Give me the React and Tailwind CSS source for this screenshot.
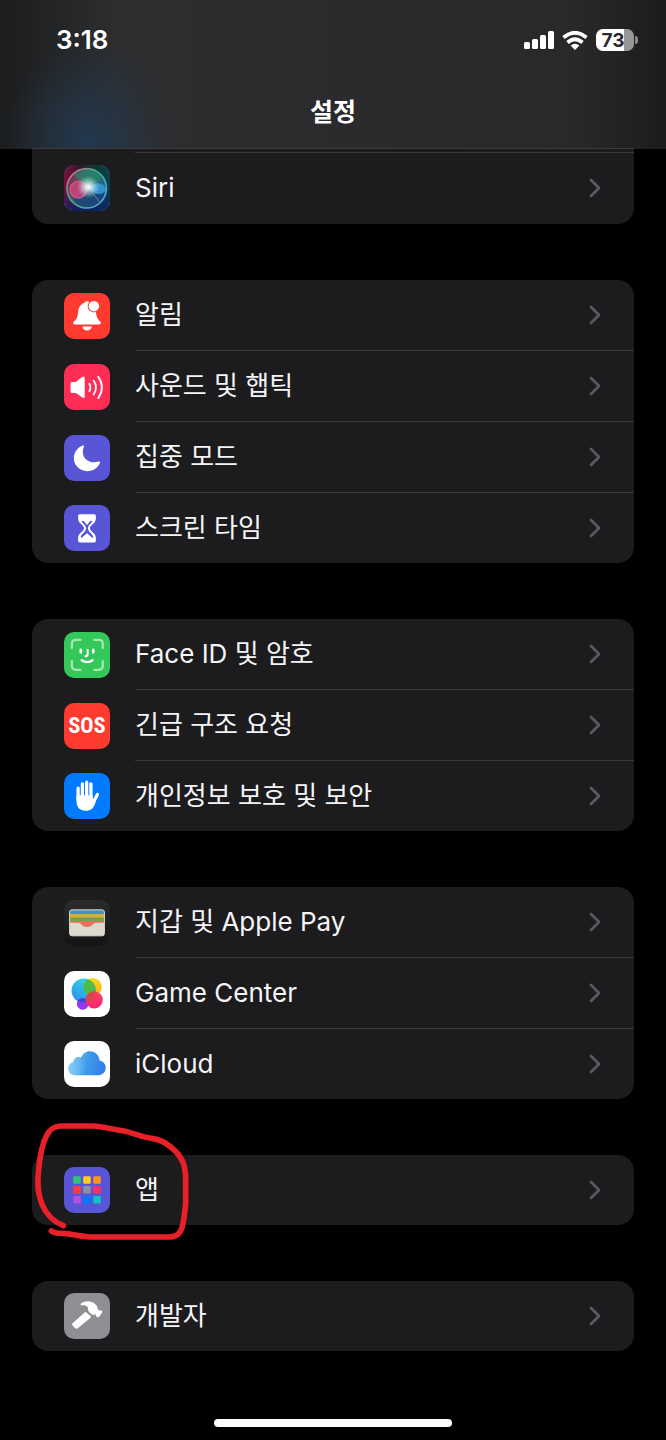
import React from 'react';

// Icons (all drawn on a 140x140 grid)
function IconBox({ className = '', children }) {
  return (
    <svg viewBox="0 0 140 140" className={`size-[46px] shrink-0 rounded-[10px] ${className}`} aria-hidden="true">
      {children}
    </svg>
  );
}

function SiriIcon() {
  return (
    <IconBox className="bg-[#14222c]">
      <defs>
        <linearGradient id="siriBg" x1="0" y1="0" x2="1" y2="0">
          <stop offset="0" stopColor="#7a0f3a" />
          <stop offset="0.35" stopColor="#3a1430" />
          <stop offset="0.65" stopColor="#0c3a35" />
          <stop offset="1" stopColor="#0a3f48" />
        </linearGradient>
        <linearGradient id="siriShade" x1="0" y1="0" x2="0" y2="1">
          <stop offset="0.45" stopColor="#0b1f6e" stopOpacity="0" />
          <stop offset="1" stopColor="#0b1f6e" stopOpacity="0.8" />
        </linearGradient>
        <linearGradient id="siriOrb" x1="0" y1="0.3" x2="1" y2="0.7">
          <stop offset="0" stopColor="#8a2452" />
          <stop offset="0.45" stopColor="#3b6a6c" />
          <stop offset="1" stopColor="#1b5f94" />
        </linearGradient>
        <linearGradient id="siriRing" x1="0" y1="0" x2="1" y2="1">
          <stop offset="0" stopColor="#e06a8c" />
          <stop offset="0.4" stopColor="#3fae86" />
          <stop offset="1" stopColor="#5aa6e0" />
        </linearGradient>
        <radialGradient id="siriGlow">
          <stop offset="0" stopColor="#fff" />
          <stop offset="0.3" stopColor="#eafcff" stopOpacity="0.75" />
          <stop offset="1" stopColor="#b8e8e0" stopOpacity="0" />
        </radialGradient>
      </defs>
      <rect width="140" height="140" fill="url(#siriBg)" />
      <rect width="140" height="140" fill="url(#siriShade)" />
      <circle cx="69" cy="71" r="60" fill="url(#siriOrb)" />
      <path d="M30 30Q70 0 110 32Q120 50 72 70Z" fill="#1f8a68" opacity="0.65" />
      <path d="M72 70L128 84Q118 122 78 130Q40 128 28 104Z" fill="#173f74" opacity="0.75" />
      <circle cx="44" cy="75" r="26" fill="#e0427e" fillOpacity="0.75" stroke="#f07aa6" strokeWidth="2" />
      <path d="M74 70C92 48 124 52 126 74C120 96 92 92 74 70Z" fill="#3a9be0" opacity="0.85" />
      <path d="M75 70L108 112" stroke="#d8cfee" strokeWidth="3" opacity="0.4" />
      <circle cx="74" cy="67" r="34" fill="url(#siriGlow)" />
      <circle cx="69" cy="71" r="60" fill="none" stroke="url(#siriRing)" strokeWidth="5" />
      <path d="M2 26Q4 4 26 2M114 2Q136 4 138 26M138 114Q136 136 114 138M26 138Q4 136 2 114" fill="none" stroke="#6d7480" strokeWidth="2" opacity="0.7" />
    </IconBox>
  );
}

function BellIcon() {
  return (
    <IconBox className="bg-[#ff3b30]">
      <path d="M36 96C27 96 26 90 31 86C39 79 42 72 43 58C44 43 52 34 62 30C64 23 76 23 78 30C92 36 96 46 97 58C98 72 102 79 109 86C114 90 113 96 104 96Z" fill="#fff" />
      <circle cx="91" cy="40" r="19" fill="#ff3b30" />
      <circle cx="91" cy="40" r="16" fill="#fff" />
      <path d="M56 102H85Q82 114 70 114Q59 114 56 102Z" fill="#fff" />
    </IconBox>
  );
}

function SoundIcon() {
  return (
    <IconBox className="bg-[#ff2d55]">
      <path d="M24 55H36L56 39Q63 35 63 43V99Q63 107 56 102L36 88H24Q20 88 20 84V59Q20 55 24 55Z" fill="#fff" />
      <g fill="none" stroke="#fff" strokeWidth="5.5" strokeLinecap="round">
        <path d="M77 60Q84 71 77 83" />
        <path d="M90 50Q105 71 90 93" />
        <path d="M104 39Q127 71 104 104" />
      </g>
    </IconBox>
  );
}

function MoonIcon() {
  return (
    <IconBox className="bg-[#5856d6]">
      <path d="M56 33C60 31 62 33 60 37C56 48 56 62 65 72C75 82 91 86 105 81C109 80 111 82 109 86C102 101 88 110 71 110C48 110 30 93 30 71C30 54 40 39 56 33Z" fill="#fff" />
    </IconBox>
  );
}

function HourglassIcon() {
  return (
    <IconBox className="bg-[#5856d6]">
      <path d="M48 28H92Q97 28 97 33V42C97 56 79 61 79 71C79 81 97 86 97 100V109Q97 114 92 114H48Q43 114 43 109V100C43 86 61 81 61 71C61 61 43 56 43 42V33Q43 28 48 28Z" fill="#fff" />
      <path d="M53 49H87C83 57 73 62 73 71C73 83 89 88 89 98Q88 101 85 99L70 86L55 99Q52 101 51 98C51 88 67 83 67 71C67 62 57 57 53 49Z" fill="#5856d6" />
      <path d="M60 49H80L70 61Z" fill="#fff" />
    </IconBox>
  );
}

function FaceIdIcon() {
  return (
    <IconBox className="bg-[#34c759]">
      <path d="M24 49V36Q24 24 36 24H50M92 24H106Q118 24 118 36V49M118 89V103Q118 115 106 115H92M50 115H36Q24 115 24 103V89" fill="none" stroke="#a4e6b4" strokeWidth="7" strokeLinecap="round" />
      <g fill="none" stroke="#fff" strokeWidth="8" strokeLinecap="round">
        <path d="M51 54V62M89 54V62" />
        <path d="M72 54V67Q72 74 65 74" strokeWidth="6" />
        <path d="M54 86Q71 97 87 86" strokeWidth="7" />
      </g>
    </IconBox>
  );
}

function SosIcon() {
  return (
    <span className="flex size-[46px] shrink-0 items-center justify-center rounded-[10px] bg-[#ff3b30] font-['Roboto_Condensed','Open_Sans_Condensed','Noto_Sans_Condensed','Roboto',sans-serif] text-[22px] font-bold text-white">
      SOS
    </span>
  );
}

function HandIcon() {
  return (
    <IconBox className="bg-[#007aff]">
      <path d="M43 46V80M56 33V75M69 28V75M82 33V75M102 65L90 88" fill="none" stroke="#fff" strokeWidth="10" strokeLinecap="round" />
      <path d="M38 68H87V79L97 78L95 92C90 107 82 115 66 115C48 115 38 104 38 86Z" fill="#fff" />
    </IconBox>
  );
}

function WalletIcon() {
  return (
    <IconBox className="bg-linear-to-b from-[#2c2c2c] to-[#141414]">
      <clipPath id="walletClip">
        <rect x="17" y="30" width="106" height="79" rx="7" />
      </clipPath>
      <g clipPath="url(#walletClip)">
        <rect x="16" y="29" width="108" height="81" fill="#dcd9cd" />
        <rect x="16" y="29" width="108" height="16" fill="#4b91b8" />
        <rect x="16" y="43" width="108" height="12" fill="#dcae35" />
        <rect x="16" y="53" width="108" height="13" fill="#76a445" />
        <path d="M16 64H124V69H96C88 69 86 82 70 82C54 82 52 69 44 69H16Z" fill="#e96f5e" />
      </g>
      <rect x="17" y="30" width="106" height="79" rx="7" fill="none" stroke="#dcd9cd" strokeWidth="3" />
    </IconBox>
  );
}

function GameCenterIcon() {
  return (
    <IconBox className="bg-white">
      <defs>
        <linearGradient id="gcBlue" x1="0.8" y1="0" x2="0.2" y2="1">
          <stop offset="0" stopColor="#35dcd8" />
          <stop offset="1" stopColor="#2c8df5" />
        </linearGradient>
        <linearGradient id="gcYellow" x1="0" y1="0" x2="0.6" y2="1">
          <stop offset="0" stopColor="#f7e21d" />
          <stop offset="1" stopColor="#ffb51c" />
        </linearGradient>
        <linearGradient id="gcRed" x1="0" y1="0" x2="0" y2="1">
          <stop offset="0" stopColor="#f5455c" />
          <stop offset="1" stopColor="#fb2476" />
        </linearGradient>
        <clipPath id="gcBlueClip">
          <circle cx="60" cy="60" r="37" />
        </clipPath>
      </defs>
      <circle cx="57" cy="100" r="18" fill="#9a35f5" />
      <circle cx="87" cy="49" r="28" fill="url(#gcYellow)" />
      <circle cx="60" cy="60" r="37" fill="url(#gcBlue)" />
      <circle cx="87" cy="49" r="28" fill="#4fba48" clipPath="url(#gcBlueClip)" />
      <circle cx="57" cy="100" r="18" fill="#4a42d8" clipPath="url(#gcBlueClip)" />
      <circle cx="92" cy="88" r="26" fill="url(#gcRed)" />
      <circle cx="92" cy="88" r="26" fill="#d9454f" clipPath="url(#gcBlueClip)" />
    </IconBox>
  );
}

function CloudIcon() {
  return (
    <IconBox className="bg-white">
      <defs>
        <linearGradient id="cloudFill" x1="0" y1="0.5" x2="1" y2="0.6">
          <stop offset="0" stopColor="#7fc8f6" />
          <stop offset="0.5" stopColor="#3f9bea" />
          <stop offset="1" stopColor="#2f7ce8" />
        </linearGradient>
        <linearGradient id="cloudPuff" x1="0" y1="0" x2="1" y2="0">
          <stop offset="0" stopColor="#8fd2f8" stopOpacity="0.5" />
          <stop offset="1" stopColor="#8fd2f8" stopOpacity="0" />
        </linearGradient>
      </defs>
      <path d="M34 104C21 104 13 95 13 84C13 74 19 67 28 65C29 53 42 45 52 51C57 38 67 31 79 31C95 31 107 43 108 59C119 61 127 70 127 81C127 94 118 104 105 104Z" fill="url(#cloudFill)" />
      <path d="M13 84C13 74 19 67 28 65C29 53 42 45 52 51C60 56 70 65 68 76C64 95 45 104 34 104C21 104 13 95 13 84Z" fill="url(#cloudPuff)" />
      <path d="M52 51Q57 54 58 60" fill="none" stroke="#2f80d6" strokeWidth="2" opacity="0.6" />
    </IconBox>
  );
}

function AppsIcon() {
  const tiles = ['#34c37b', '#ffcc1f', '#ff9518', '#ff3b3f', '#8e8e9c', '#ff2d62', '#af52e6', '#007aff', '#0fc2c8'];
  return (
    <IconBox className="bg-[#5856d6]">
      {tiles.map((color, i) => (
        <rect key={color} x={28 + (i % 3) * 30.5} y={28 + Math.floor(i / 3) * 30} width="23" height="23" rx="4" fill={color} />
      ))}
    </IconBox>
  );
}

function HammerIcon() {
  return (
    <IconBox className="bg-[#8e8e93]">
      <path d="M68 59L81 70Q83 73 80 76L42 107Q38 110 34 107L26 99Q23 96 26 92L62 60Q65 56 68 59Z" fill="#fff" />
      <path d="M51 33C58 24 78 22 90 30C98 36 103 42 103 50L108 53Q112 51 115 54Q118 57 115 62L107 72Q103 76 99 72Q96 69 97 65Q90 69 83 64L75 56C71 51 75 45 71 42C66 37 60 37 54 38Q48 37 51 33Z" fill="#fff" />
    </IconBox>
  );
}

function Chevron() {
  return (
    <svg viewBox="0 0 12 20" className="h-5 w-3 shrink-0" fill="none" stroke="#5a5a5e" strokeWidth="2.8" strokeLinecap="round" strokeLinejoin="round" aria-hidden="true">
      <path d="M2 2L10 10L2 18" />
    </svg>
  );
}

// Status bar
function StatusBar() {
  return (
    <div className="flex items-center justify-between pt-6 pr-7 pl-14 text-white">
      <span className="text-[26px] leading-8 font-semibold">3:18</span>
      <div className="flex items-center gap-2">
        <svg viewBox="0 0 30 18" className="h-[18px] w-[30px]" fill="#fff" aria-hidden="true">
          <rect x="0" y="11" width="6" height="7" rx="1.500" />
          <rect x="8" y="8" width="6" height="10" rx="1.500" />
          <rect x="16" y="4" width="6" height="14" rx="1.500" />
          <rect x="24" y="0" width="6" height="18" rx="1.500" />
        </svg>
        <svg viewBox="0 0 26 19" className="h-[19px] w-[26px]" fill="none" stroke="#fff" strokeWidth="3.800" aria-hidden="true">
          <path d="M1.500 6.500Q13 -3 24.500 6.500" />
          <path d="M5.500 11.500Q13 5 20.500 11.500" />
          <path d="M13 19L8.600 14.600Q13 11 17.400 14.600Z" fill="#fff" stroke="none" />
        </svg>
        <div className="flex items-center gap-px">
          <span className="flex h-[22px] w-[38px] items-center justify-center rounded-[7px] bg-linear-to-r from-white from-73% to-[#97979a] to-73% pr-1 text-[19px] leading-none font-bold text-[#29292b]">
            73
          </span>
          <span className="h-2 w-[3px] rounded-r-full bg-[#8a8a8d]" />
        </div>
      </div>
    </div>
  );
}

function Header() {
  return (
    <header className="relative h-[149px] bg-[linear-gradient(to_right,#1c1d1e,#2d2e30_18%,#2b2b2d_50%,#29292b_86%,#1c1c1d)]">
      <div className="absolute inset-0 bg-radial-[80px_100px_at_13%_95%] from-[#22384e] to-transparent" />
      <div className="relative">
        <StatusBar />
        <h1 className="pt-9 text-center text-[25px] leading-10 font-semibold text-white">설정</h1>
      </div>
      <div className="absolute inset-x-8 bottom-0 h-px bg-[#3a3a3d]" />
    </header>
  );
}

// One row of a settings card
function Row({ icon: Icon, label, last }) {
  return (
    <li>
      <a href="#" className="flex items-center gap-[25px] pl-8">
        <Icon />
        <span className={`flex flex-1 items-center justify-between pr-[33px] ${last ? '' : 'border-b border-[#38383a]'}`}>
          <span className="text-[26px] leading-[70px] text-[#f5f5f7]">{label}</span>
          <Chevron />
        </span>
      </a>
    </li>
  );
}

function Card({ rows, children }) {
  return (
    <section className="relative">
      <ul className="overflow-hidden rounded-2xl bg-[#1c1c1e]">
        {rows.map((row, i) => (
          <Row key={row.label} {...row} last={i === rows.length - 1} />
        ))}
      </ul>
      {children}
    </section>
  );
}

// Hand-drawn red loop around the apps row
function Scribble() {
  return (
    <svg viewBox="0 0 570 450" className="pointer-events-none absolute -top-[45px] -left-3 h-[150px] w-[190px]" fill="none" stroke="#e8202a" strokeWidth="17" strokeLinecap="round" strokeLinejoin="round" aria-hidden="true">
      <path d="M130 347C98 334 79 313 67 285C54 252 51 222 55 190C58 150 62 112 79 78C88 58 99 49 122 48H220C250 50 275 58 312 63C340 68 362 82 400 86C425 89 445 103 466 123C489 146 496 170 497 205V280C494 310 492 332 486 352C480 373 468 381 445 381H210C175 378 158 373 140 371C120 370 104 371 94 363" />
    </svg>
  );
}

const groups = [
  [
    { icon: BellIcon, label: '알림' },
    { icon: SoundIcon, label: '사운드 및 햅틱' },
    { icon: MoonIcon, label: '집중 모드' },
    { icon: HourglassIcon, label: '스크린 타임' },
  ],
  [
    { icon: FaceIdIcon, label: 'Face ID 및 암호' },
    { icon: SosIcon, label: '긴급 구조 요청' },
    { icon: HandIcon, label: '개인정보 보호 및 보안' },
  ],
  [
    { icon: WalletIcon, label: '지갑 및 Apple Pay' },
    { icon: GameCenterIcon, label: 'Game Center' },
    { icon: CloudIcon, label: 'iCloud' },
  ],
];

export default function App() {
  return (
    <div className="flex min-h-screen flex-col bg-black font-['Inter','Noto_Sans_CJK_KR',sans-serif]">
      <Header />
      <main className="flex flex-col gap-14 px-8">
        <ul className="rounded-b-2xl bg-[#1c1c1e] pt-[3px] pb-px">
          <li className="ml-[103px] h-px bg-[#38383a]" />
          <Row icon={SiriIcon} label="Siri" last />
        </ul>
        {groups.map((rows) => (
          <Card key={rows[0].label} rows={rows} />
        ))}
        <Card rows={[{ icon: AppsIcon, label: '앱' }]}>
          <Scribble />
        </Card>
        <Card rows={[{ icon: HammerIcon, label: '개발자' }]} />
      </main>
      <div className="mt-auto flex justify-center pt-10 pb-[13px]">
        <div className="h-2 w-[238px] rounded-full bg-white" />
      </div>
    </div>
  );
}
